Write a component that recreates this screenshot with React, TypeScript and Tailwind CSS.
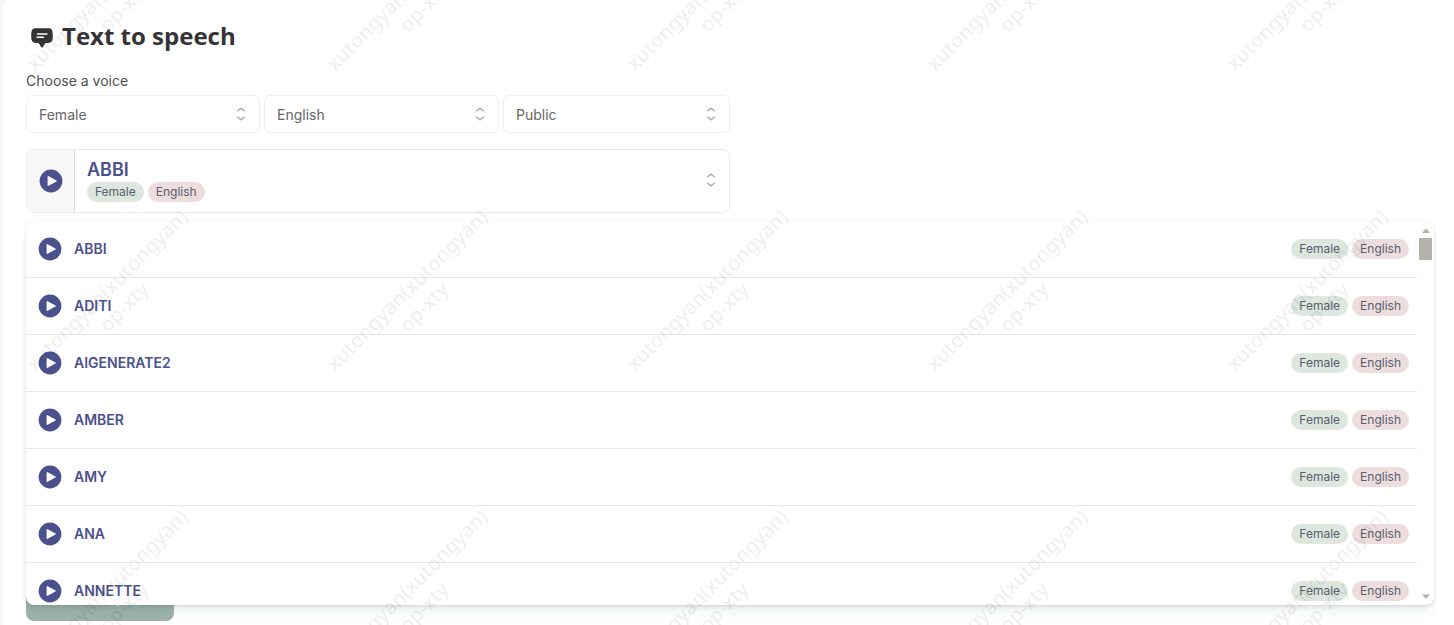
import React from "react";

interface IVoice {
  name: string;
  gender: string;
  language: string;
}

const voices: IVoice[] = [
  "ABBI",
  "ADITI",
  "AIGENERATE2",
  "AMBER",
  "AMY",
  "ANA",
  "ANNETTE",
].map((name) => ({ name, gender: "Female", language: "English" }));

const ChevronsIcon: React.FC = () => (
  <svg
    className="pointer-events-none h-[14px] w-[10px] shrink-0"
    viewBox="0 0 10 14"
    fill="none"
    stroke="#aaaaaa"
    strokeWidth="1.4"
    aria-hidden="true"
  >
    <path d="M1.200 4.300 5 1.200l3.800 3.100M1.200 9.700 5 12.800l3.800-3.100" />
  </svg>
);

const PlayButton: React.FC<{ name: string }> = ({ name }) => (
  <button type="button" aria-label={`Play ${name}`} className="shrink-0">
    <svg className="block size-6" viewBox="0 0 24 24" aria-hidden="true">
      <circle cx="12" cy="12" r="11.4" fill="#4a518c" />
      <path
        d="M9.300 7.800v8.400l7.800-4.200z"
        fill="#fff"
        stroke="#fff"
        strokeWidth="1.4"
        strokeLinejoin="round"
      />
    </svg>
  </button>
);

const Tags: React.FC<{ voice: IVoice }> = ({ voice }) => (
  <div className="flex gap-1 text-[12px] leading-5 text-[#566070]">
    <span className="rounded-full bg-[#dde7de] px-2">{voice.gender}</span>
    <span className="rounded-full bg-[#eedddd] px-2">{voice.language}</span>
  </div>
);

interface IFilterProps {
  label: string;
  options: string[];
}

const Filter: React.FC<IFilterProps> = ({ label, options }) => (
  <div className="grid items-center rounded-md border border-[#eeeeee] bg-white">
    <select
      aria-label={label}
      className="col-start-1 row-start-1 h-9 w-full appearance-none bg-transparent px-3 text-[14px] text-[#666666] outline-none"
    >
      {options.map((option) => (
        <option key={option}>{option}</option>
      ))}
    </select>
    <div className="pointer-events-none col-start-1 row-start-1 mr-[13px] justify-self-end">
      <ChevronsIcon />
    </div>
  </div>
);

const VoiceList: React.FC = () => (
  <div className="absolute inset-x-0 top-full z-10 mt-2 flex h-96 overflow-hidden rounded-lg bg-white shadow-[0_0_1px_rgba(0,0,0,0.16),0_2px_4px_rgba(0,0,0,0.1),0_10px_10px_-2px_rgba(40,80,70,0.06)]">
    <ul className="flex-1 overflow-hidden">
      {voices.map((voice) => (
        <li
          key={voice.name}
          className="flex h-[57px] items-center gap-3 border-b border-[#e8e8e8] pr-2 pl-3"
        >
          <PlayButton name={voice.name} />
          <span className="flex-1 text-[14px] leading-5 font-semibold text-[#4a518c]">
            {voice.name}
          </span>
          <Tags voice={voice} />
        </li>
      ))}
    </ul>
    <div
      className="flex w-[17px] flex-col items-center pt-[7px] pb-[3px]"
      aria-hidden="true"
    >
      <svg className="size-2" viewBox="0 0 8 8">
        <path d="M4 0.500 8 5H0z" fill="#b3b3ab" />
      </svg>
      <div className="mt-[2px] h-[22px] w-[13px] bg-[#b3b3ab]" />
      <svg className="mt-auto size-2" viewBox="0 0 8 8">
        <path d="M0 0.500h8L4 5z" fill="#b3b3ab" />
      </svg>
    </div>
  </div>
);

const Watermark: React.FC = () => (
  <svg
    className="pointer-events-none absolute inset-0 z-20 h-full w-full"
    aria-hidden="true"
  >
    {[-10, 290, 590].map((y) =>
      [107, 407, 707, 1007, 1307].map((x) => (
        <g
          key={`${x}-${y}`}
          transform={`translate(${x} ${y}) rotate(-45)`}
          className="fill-black/8 font-['Noto_Sans',sans-serif] text-[20px] font-medium"
          textAnchor="middle"
        >
          <text y="7">xutongyan(xutongyan)</text>
          <text y="31">op-xty</text>
        </g>
      ))
    )}
  </svg>
);

export default function App() {
  const selected = voices[0];

  return (
    <div className="relative h-screen overflow-hidden bg-[#f7f7f7] pl-[2px] font-['Inter',sans-serif]">
      <main className="min-h-screen rounded-tl-lg bg-white pt-5 pr-5 pl-6">
        <h1 className="flex items-center gap-2 pl-1 font-['Open_Sans',sans-serif] text-[24px] leading-8 font-bold text-[#363336]">
          <svg className="mt-1 size-6" viewBox="0 0 24 24" aria-hidden="true">
            <path
              d="M6 2.200h12c3.600 0 4.800 1.800 4.800 7.400s-1.200 7.400-4.800 7.400h-2.500L12.700 21.300c-.4.600-1 .6-1.400 0L8.500 17H6c-3.600 0-4.800-1.800-4.800-7.400S2.400 2.200 6 2.200z"
              fill="#363336"
            />
            <path
              d="M7.500 8h9.500M7 11.300h6.500"
              stroke="#fff"
              strokeWidth="1.400"
              strokeLinecap="round"
            />
          </svg>
          Text to speech
        </h1>
        <p className="mt-[19px] text-[14px] leading-5 text-[#4f4f4f]">
          Choose a voice
        </p>
        <div className="mt-1 grid w-1/2 grid-cols-[234fr_235fr_227fr] gap-1">
          <Filter label="Gender" options={["Female", "Male"]} />
          <Filter label="Language" options={["English"]} />
          <Filter label="Visibility" options={["Public", "Private"]} />
        </div>
        <div className="relative mt-4">
          <div className="flex h-16 w-1/2 overflow-hidden rounded-lg border border-[#eaeaea]">
            <div className="flex w-12 items-center justify-center border-r border-[#dddddd] bg-[#f7f7f7]">
              <PlayButton name={selected.name} />
            </div>
            <button
              type="button"
              aria-haspopup="listbox"
              aria-expanded="true"
              className="flex flex-1 items-center justify-between pr-[13px] pb-[2px] pl-3 text-left"
            >
              <div>
                <div className="text-[18px] leading-6 font-semibold text-[#4a518c]">
                  {selected.name}
                </div>
                <Tags voice={selected} />
              </div>
              <ChevronsIcon />
            </button>
          </div>
          <VoiceList />
        </div>
        <button
          type="button"
          className="mt-[360px] block h-12 w-[148px] rounded-lg bg-[#9cb3ab] text-[14px] font-semibold text-white"
        >
          Generate speech
        </button>
      </main>
      <Watermark />
    </div>
  );
}
